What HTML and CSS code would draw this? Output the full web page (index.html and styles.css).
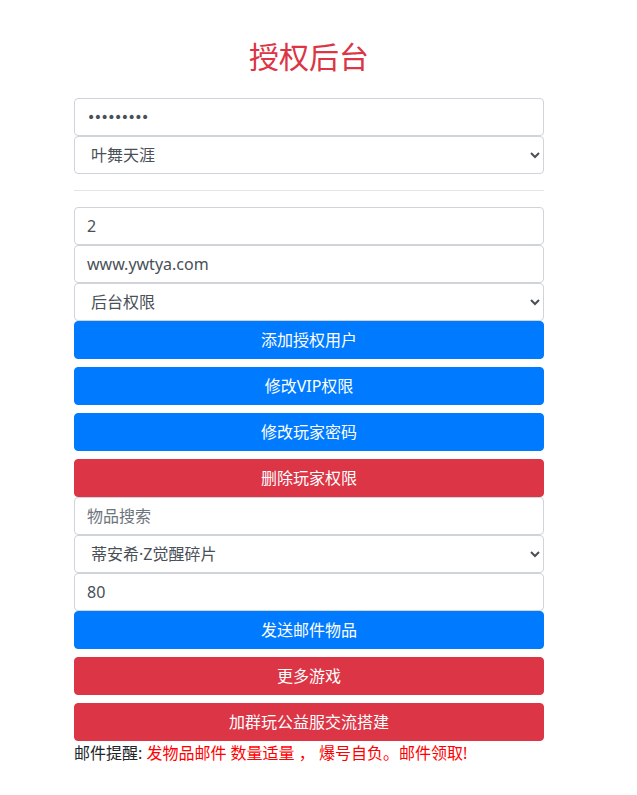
FILE: index.html
```html
<!DOCTYPE html>
<html lang="zh-CN">
<head>
<meta charset="utf-8">
<title>授权后台</title>
<link rel="stylesheet" href="styles.css">
</head>
<body>
<div class="container">
  <h2 class="title">授权后台</h2>
  <div class="group">
    <input class="field password" type="password" value="123456789">
    <select class="field select"><option>叶舞天涯</option></select>
  </div>
  <hr class="divider">
  <div class="group">
    <input class="field" type="text" value="2">
    <input class="field" type="text" value="www.ywtya.com">
    <select class="field select"><option>后台权限</option></select>
    <button class="btn primary">添加授权用户</button>
    <button class="btn primary spaced">修改VIP权限</button>
    <button class="btn primary spaced">修改玩家密码</button>
    <button class="btn danger spaced">删除玩家权限</button>
    <input class="field" type="text" placeholder="物品搜索">
    <select class="field select"><option>蒂安希·Z觉醒碎片</option></select>
    <input class="field" type="text" value="80">
    <button class="btn primary">发送邮件物品</button>
    <button class="btn danger spaced">更多游戏</button>
    <button class="btn danger spaced">加群玩公益服交流搭建</button>
  </div>
  <p class="notice">邮件提醒: <span class="notice-red">发物品邮件 数量适量 ， 爆号自负。邮件领取!</span></p>
</div>
</body>
</html>
```

FILE: styles.css
```css
* { box-sizing: border-box; }
body {
  margin: 0;
  background: #fff;
  font-family: "Noto Sans", "Noto Sans CJK SC", sans-serif;
  font-size: 16px;
  color: #212529;
}
.container {
  width: 470px;
  margin: 0 93px 0 74px;
  padding-top: 37px;
}
.title {
  margin: 0 0 24px;
  text-align: center;
  font-family: "Noto Sans CJK SC", sans-serif;
  font-size: 30px;
  line-height: 37px;
  font-weight: 400;
  color: #dc3545;
}
.group {
  display: flex;
  flex-direction: column;
}
.field {
  display: block;
  width: 100%;
  height: 38px;
  padding: 6px 12px;
  font-family: "Noto Sans", "Noto Sans CJK SC", sans-serif;
  font-size: 16px;
  line-height: 24px;
  color: #495057;
  background: #fff;
  border: 1px solid #ced4da;
  border-radius: 4px;
  margin: 0;
  outline: none;
}
.password {
  font-family: "DejaVu Sans", sans-serif;
  font-size: 14px;
  letter-spacing: -1.5px;
}
.field::placeholder { color: #6c757d; opacity: 1; }
.select { padding-left: 12px; }
.divider {
  margin: 16px 0;
  border: 0;
  border-top: 1px solid rgba(0,0,0,0.1);
  height: 0;
}
.btn {
  display: block;
  width: 100%;
  height: 38px;
  padding: 6px 12px;
  font-family: "Noto Sans", "Noto Sans CJK SC", sans-serif;
  font-size: 16px;
  line-height: 24px;
  color: #fff;
  border: 1px solid transparent;
  border-radius: 4px;
  margin: 0;
  text-align: center;
}
.spaced { margin-top: 8px; }
.primary { background: #007bff; border-color: #007bff; }
.danger { background: #dc3545; border-color: #dc3545; }
.notice {
  margin: 0;
  font-size: 16px;
  line-height: 24px;
  color: #212529;
}
.notice-red { color: #ff0000; }
```
